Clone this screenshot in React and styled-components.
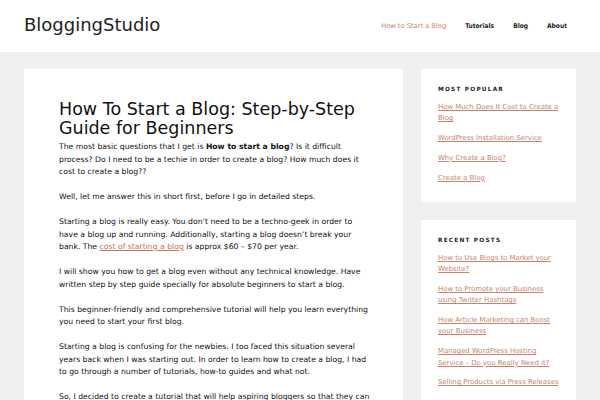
import styled, { createGlobalStyle } from "styled-components";

const GlobalStyle = createGlobalStyle`
  html, body {
    margin: 0;
    padding: 0;
    background: #efefef;
  }
  body {
    font-family: "DejaVu Sans", sans-serif;
    color: #222;
  }
  p { margin: 0; }
`;

const Page = styled.div`
  width: 600px;
  height: 400px;
  overflow: hidden;
  background: #efefef;
`;

const Header = styled.header`
  height: 52px;
  background: #fff;
  display: flex;
  align-items: center;
  justify-content: space-between;
  padding: 0 33px 0 24px;
  box-sizing: border-box;
`;

const Logo = styled.div`
  font-family: "DejaVu Sans", sans-serif;
  font-size: 18px;
  color: #222;
  margin-top: -4px;
`;

const Nav = styled.nav`
  display: flex;
  align-items: baseline;
  gap: 19px;
`;

const NavLink = styled.a`
  font-family: ${(p) => (p.$active ? '"DejaVu Sans"' : '"DejaVu Sans Condensed", "DejaVu Sans"')}, sans-serif;
  font-size: ${(p) => (p.$active ? "6.7px" : "6.6px")};
  font-weight: ${(p) => (p.$active ? "normal" : "bold")};
  color: ${(p) => (p.$active ? "#c9836a" : "#222")};
  text-decoration: none;
`;

const Body = styled.div`
  display: flex;
  gap: 18px;
  padding: 17px 24px 0 24px;
  align-items: flex-start;
`;

const Main = styled.main`
  width: 379px;
  background: #fff;
  padding: 31px 31px 40px 35px;
  box-sizing: border-box;
  flex-shrink: 0;
`;

const Title = styled.h1`
  font-family: "DejaVu Sans", sans-serif;
  font-weight: normal;
  font-size: 17.5px;
  line-height: 18.5px;
  color: #111;
  margin: 0 0 4px 0;
`;

const Para = styled.p`
  font-family: "DejaVu Sans", sans-serif;
  font-size: 7.7px;
  line-height: 12.5px;
  color: #111;
  margin-bottom: 12.5px !important;

  strong { font-weight: bold; }
  a {
    color: #c9735a;
    text-decoration: underline;
  }
`;

const Sidebar = styled.aside`
  width: 155px;
  display: flex;
  flex-direction: column;
  gap: 18px;
`;

const Widget = styled.section`
  background: #fff;
  padding: 16px 13px 18px 17px;
  box-sizing: border-box;
`;

const WidgetTitle = styled.h4`
  font-family: "DejaVu Sans", sans-serif;
  font-size: 5.8px;
  line-height: 8px;
  font-weight: bold;
  letter-spacing: 1.2px;
  text-transform: uppercase;
  color: #222;
  margin: 0 0 9px 0;
`;

const LinkList = styled.ul`
  list-style: none;
  margin: 0;
  padding: 0;
  display: flex;
  flex-direction: column;
  gap: 8.5px;
`;

const SideLink = styled.a`
  display: block;
  font-family: "DejaVu Sans", sans-serif;
  font-size: 6.9px;
  line-height: 11.3px;
  color: #c4836c;
  text-decoration: underline;
`;

const popular = [
  "How Much Does It Cost to Create a Blog",
  "WordPress Installation Service",
  "Why Create a Blog?",
  "Create a Blog",
];

const recent = [
  "How to Use Blogs to Market your Website?",
  "How to Promote your Business using Twitter Hashtags",
  "How Article Marketing can Boost your Business",
  "Managed WordPress Hosting Service – Do you Really Need it?",
  "Selling Products via Press Releases",
];

export default function App() {
  return (
    <Page>
      <GlobalStyle />
      <Header>
        <Logo>BloggingStudio</Logo>
        <Nav>
          <NavLink $active>How to Start a Blog</NavLink>
          <NavLink>Tutorials</NavLink>
          <NavLink>Blog</NavLink>
          <NavLink>About</NavLink>
        </Nav>
      </Header>
      <Body>
        <Main>
          <Title>How To Start a Blog: Step-by-Step Guide for Beginners</Title>
          <Para>
            The most basic questions that I get is <strong>How to start a blog</strong>? Is it difficult
            process? Do I need to be a techie in order to create a blog? How much does it
            cost to create a blog??
          </Para>
          <Para>Well, let me answer this in short first, before I go in detailed steps.</Para>
          <Para>
            Starting a blog is really easy. You don’t need to be a techno-geek in order to
            have a blog up and running. Additionally, starting a blog doesn’t break your
            bank. The <a>cost of starting a blog</a> is approx $60 – $70 per year.
          </Para>
          <Para>
            I will show you how to get a blog even without any technical knowledge. Have
            written step by step guide specially for absolute beginners to start a blog.
          </Para>
          <Para>
            This beginner-friendly and comprehensive tutorial will help you learn everything
            you need to start your first blog.
          </Para>
          <Para>
            Starting a blog is confusing for the newbies. I too faced this situation several
            years back when I was starting out. In order to learn how to create a blog, I had
            to go through a number of tutorials, how-to guides and what not.
          </Para>
          <Para>
            So, I decided to create a tutorial that will help aspiring bloggers so that they can
            start their blog without any hassle.
          </Para>
        </Main>
        <Sidebar>
          <Widget>
            <WidgetTitle>Most Popular</WidgetTitle>
            <LinkList>
              {popular.map((t) => (
                <li key={t}><SideLink>{t}</SideLink></li>
              ))}
            </LinkList>
          </Widget>
          <Widget>
            <WidgetTitle>Recent Posts</WidgetTitle>
            <LinkList>
              {recent.map((t) => (
                <li key={t}><SideLink>{t}</SideLink></li>
              ))}
            </LinkList>
          </Widget>
        </Sidebar>
      </Body>
    </Page>
  );
}
